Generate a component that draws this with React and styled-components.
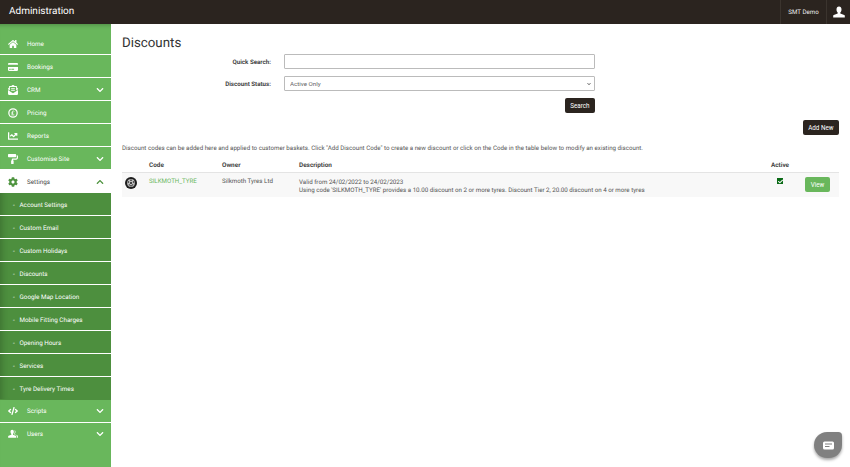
import styled, { createGlobalStyle } from "styled-components"
import {
  FaHome, FaCreditCard, FaEnvelopeOpenText, FaChartLine, FaPaintRoller, FaCog,
  FaCode, FaChevronDown, FaChevronUp, FaCheck,
} from "react-icons/fa"

const GlobalStyle = createGlobalStyle`
  html, body { margin: 0; padding: 0; height: 100%; background: #fff; }
  body {
    font-family: Roboto, "Liberation Sans", sans-serif;
    text-rendering: geometricPrecision;
    overflow: hidden;
  }
  * { box-sizing: border-box; }
`

function PoundIcon() {
  return (
    <svg width="10" height="10" viewBox="0 0 12 12" fill="none">
      <circle cx="6" cy="6" r="5" stroke="#fff" strokeWidth="1.5" />
      <path d="M7.4 4.2C7 3.2 5.3 3.3 5.2 4.6V7.8M4 6h2.4M4 8.3h3.6" stroke="#fff" strokeWidth="1" />
    </svg>
  )
}

function BustIcon() {
  return (
    <svg width="12" height="12" viewBox="0 0 12 12" fill="#fff">
      <path d="M6 0.5C4.4 0.5 3.5 1.7 3.5 3.4C3.5 4.7 4 5.8 4.7 6.4V7.4L0.8 8.9C0.4 9.1 0.2 9.4 0.2 9.8V11.5H11.8V9.8C11.8 9.4 11.6 9.1 11.2 8.9L7.3 7.4V6.4C8 5.8 8.5 4.7 8.5 3.4C8.5 1.7 7.6 0.5 6 0.5Z" />
    </svg>
  )
}

function UsersIcon() {
  return (
    <svg width="10" height="10" viewBox="0 0 12 12" fill="#fff">
      <path d="M5 1C3.7 1 3 2 3 3.4C3 4.5 3.4 5.4 4 5.9V6.8L0.8 8.1C0.4 8.3 0.2 8.6 0.2 9V10.5H9.8V9C9.8 8.6 9.6 8.3 9.2 8.1L6 6.8V5.9C6.6 5.4 7 4.5 7 3.4C7 2 6.3 1 5 1Z" />
      <path d="M7.6 1.6C8.6 1.8 9 2.6 9 3.6C9 4.5 8.7 5.2 8.2 5.7V6.4L11 7.6C11.5 7.8 11.8 8.1 11.8 8.6V10.5H10.6V8.8C10.6 8 10.2 7.6 9.6 7.3L7.2 6.2C7.9 5.4 8.2 4.5 8.2 3.4C8.2 2.8 8 2.1 7.6 1.6Z" />
    </svg>
  )
}

function TyreIcon() {
  return (
    <svg width="12" height="12" viewBox="0 0 12 12">
      <circle cx="6" cy="6" r="6" fill="#1d1d1d" />
      <circle cx="6" cy="6" r="3.9" fill="#bdbdbd" />
      <circle cx="6" cy="6" r="1" fill="#1d1d1d" />
      <circle cx="6" cy="3.3" r=".8" fill="#1d1d1d" />
      <circle cx="6" cy="8.7" r=".8" fill="#1d1d1d" />
      <circle cx="3.4" cy="5" r=".8" fill="#1d1d1d" />
      <circle cx="8.6" cy="5" r=".8" fill="#1d1d1d" />
      <circle cx="4.3" cy="7.9" r=".6" fill="#1d1d1d" />
      <circle cx="7.7" cy="7.9" r=".6" fill="#1d1d1d" />
    </svg>
  )
}

function ChatIcon() {
  return (
    <svg width="11" height="9" viewBox="0 0 11 9">
      <rect x="0" y="0.5" width="11" height="8" rx="1.5" fill="#fff" />
      <rect x="2" y="2.5" width="7" height="1" fill="#808080" />
      <rect x="2" y="5" width="4.5" height="1" fill="#808080" />
    </svg>
  )
}

const menuTop = [
  { label: "Home", icon: <FaHome size={10} /> },
  { label: "Bookings", icon: <FaCreditCard size={10} /> },
  { label: "CRM", icon: <FaEnvelopeOpenText size={10} />, arrow: true },
  { label: "Pricing", icon: <PoundIcon /> },
  { label: "Reports", icon: <FaChartLine size={10} /> },
  { label: "Customise Site", icon: <FaPaintRoller size={10} />, arrow: true },
]

const subMenu = [
  "Account Settings", "Custom Email", "Custom Holidays", "Discounts", "Google Map Location",
  "Mobile Fitting Charges", "Opening Hours", "Services", "Tyre Delivery Times",
]

const menuBottom = [
  { label: "Scripts", icon: <FaCode size={10} />, arrow: true },
  { label: "Users", icon: <UsersIcon />, arrow: true },
]

function MenuRow({ item, as }) {
  return (
    <MenuItem as={as}>
      <MenuIcon>{item.icon}</MenuIcon>
      <span>{item.label}</span>
      {item.arrow && <Arrow><FaChevronDown size={8} /></Arrow>}
    </MenuItem>
  )
}

export default function App() {
  return (
    <>
      <GlobalStyle />
      <Page>
        <Header>
          <Brand>Administration</Brand>
          <UserName>SMT Demo</UserName>
          <UserButton><BustIcon /></UserButton>
        </Header>
        <Body>
          <Sidebar>
            {menuTop.map(item => <MenuRow key={item.label} item={item} />)}
            <ActiveItem>
              <MenuIcon><FaCog size={10} /></MenuIcon>
              <span>Settings</span>
              <Arrow><FaChevronUp size={8} /></Arrow>
            </ActiveItem>
            {subMenu.map(label => (
              <SubItem key={label}>
                <SubDash>-</SubDash>
                <span>{label}</span>
              </SubItem>
            ))}
            {menuBottom.map(item => <MenuRow key={item.label} item={item} as={BottomItem} />)}
          </Sidebar>
          <Main>
            <Title>Discounts</Title>
            <SearchForm>
              <FieldRow>
                <FieldLabel>Quick Search:</FieldLabel>
                <TextInput />
              </FieldRow>
              <FieldRow>
                <FieldLabel>Discount Status:</FieldLabel>
                <SelectWrap>
                  <SelectInput defaultValue="Active Only">
                    <option>Active Only</option>
                  </SelectInput>
                  <SelectArrow><FaChevronDown size={4} /></SelectArrow>
                </SelectWrap>
              </FieldRow>
              <SearchActions>
                <DarkButton>Search</DarkButton>
              </SearchActions>
            </SearchForm>
            <AddRow>
              <DarkButton>Add New</DarkButton>
            </AddRow>
            <Intro>
              Discount codes can be added here and applied to customer baskets. Click "Add Discount Code" to create a new discount or click on the Code in the table below to modify an existing discount.
            </Intro>
            <Table>
              <HeadRow>
                <span />
                <span>Code</span>
                <span>Owner</span>
                <span>Description</span>
                <ActiveHead>Active</ActiveHead>
                <span />
              </HeadRow>
              <DataRow>
                <TyreCell><TyreIcon /></TyreCell>
                <CodeLink>SILKMOTH_TYRE</CodeLink>
                <span>Silkmoth Tyres Ltd</span>
                <Description>
                  <div>Valid from 24/02/2022 to 24/02/2023</div>
                  <div>Using code 'SILKMOTH_TYRE' provides a 10.00 discount on 2 or more tyres. Discount Tier 2, 20.00 discount on 4 or more tyres</div>
                </Description>
                <CheckCell><CheckBox><FaCheck size={5} /></CheckBox></CheckCell>
                <ViewButton>View</ViewButton>
              </DataRow>
            </Table>
          </Main>
        </Body>
        <ChatBubble><ChatIcon /></ChatBubble>
      </Page>
    </>
  )
}

const Page = styled.div`
  width: 850px;
  height: 467px;
  display: flex;
  flex-direction: column;
  overflow: hidden;
  position: relative;
`

const Header = styled.header`
  height: 24px;
  flex-shrink: 0;
  display: flex;
  align-items: stretch;
  background: #2b241f;
  color: #fff;
`

const Brand = styled.div`
  flex: 1;
  padding: 1px 0 0 9px;
  font-size: 10px;
  line-height: 22px;
`

const UserName = styled.div`
  width: 46px;
  border-left: 1px solid #3b342e;
  font-size: 6.2px;
  line-height: 24px;
  text-align: center;
  color: #eee;
`

const UserButton = styled.div`
  width: 24px;
  border-left: 1px solid #3b342e;
  display: flex;
  align-items: center;
  justify-content: center;
`

const Body = styled.div`
  flex: 1;
  display: flex;
  min-height: 0;
`

const Sidebar = styled.nav`
  width: 111px;
  flex-shrink: 0;
  padding-top: 8px;
  background: #69b75c;
  box-shadow: inset 0 5px 4px -4px rgba(0, 0, 0, 0.25);
`

const MenuItem = styled.div`
  height: 23px;
  display: flex;
  align-items: center;
  padding: 1px 0 0 8px;
  border-bottom: 1px solid #fff;
  color: #fff;
  font-size: 6.3px;
`

const ActiveItem = styled(MenuItem)`
  background: #fff;
  color: #444;
  svg { color: #4f9440; }
`

const BottomItem = styled(MenuItem)`
  padding-top: 0;
  &:last-child { border-bottom-color: transparent; }
`

const MenuIcon = styled.span`
  width: 19px;
  display: flex;
  align-items: center;
`

const Arrow = styled.span`
  margin-left: auto;
  margin-right: 7px;
  display: flex;
`

const SubItem = styled.div`
  height: 23px;
  display: flex;
  align-items: center;
  padding: 1px 0 0 13px;
  background: #4d8f3e;
  border-bottom: 1px solid #fff;
  box-shadow: inset 8px 0 6px -6px rgba(0, 0, 0, 0.2);
  color: #fff;
  font-size: 6.3px;
  &:nth-last-child(3) { border-bottom-color: #4d8f3e; }
`

const SubDash = styled.span`
  width: 6.5px;
`

const Main = styled.main`
  flex: 1;
  min-width: 0;
  padding: 11px 11px 0;
  color: #555;
`

const Title = styled.h1`
  margin: 0;
  height: 17px;
  font-size: 13.3px;
  font-weight: 400;
  line-height: 17px;
  color: #333;
`

const SearchForm = styled.div`
  width: 473px;
  margin-top: 2px;
`

const FieldRow = styled.div`
  display: flex;
  align-items: center;
  margin-bottom: 7px;
`

const FieldLabel = styled.label`
  width: 162px;
  padding-right: 13px;
  font-size: 6.2px;
  font-weight: 700;
  text-align: right;
  color: #444;
`

const TextInput = styled.input`
  flex: 1;
  height: 15px;
  border: 1px solid #bbb;
  border-radius: 1px;
  background: #fff;
`

const SelectWrap = styled.div`
  flex: 1;
  display: flex;
  position: relative;
`

const SelectInput = styled.select`
  flex: 1;
  height: 15px;
  padding-left: 5px;
  border: 1px solid #bbb;
  border-radius: 1px;
  background: #fff;
  appearance: none;
  font-family: Roboto, sans-serif;
  font-size: 6.2px;
  color: #666;
`

const SelectArrow = styled.span`
  position: absolute;
  right: 4px;
  top: 6px;
  display: flex;
  color: #555;
`

const SearchActions = styled.div`
  display: flex;
  justify-content: flex-end;
  margin-top: 6px;
`

const DarkButton = styled.button`
  height: 15px;
  padding: 0 5.5px;
  border: none;
  border-radius: 2px;
  background: #2b241f;
  color: #fff;
  font-family: Roboto, sans-serif;
  font-size: 6.3px;
`

const AddRow = styled.div`
  display: flex;
  justify-content: flex-end;
  margin-top: 7px;
`

const Intro = styled.p`
  margin: 9px 0 0;
  font-size: 6.2px;
  line-height: 8px;
`

const tableColumns = "27px 73px 77px 1fr 50px 34px"

const Table = styled.div`
  margin-top: 6px;
  font-size: 6.2px;
`

const HeadRow = styled.div`
  height: 15px;
  display: grid;
  grid-template-columns: ${tableColumns};
  align-items: center;
  font-size: 6.4px;
  font-weight: 700;
  color: #444;
  border-bottom: 1px solid #e4e4e4;
`

const ActiveHead = styled.span`
  text-align: center;
`

const DataRow = styled.div`
  height: 24px;
  display: grid;
  grid-template-columns: ${tableColumns};
  align-items: start;
  padding-top: 5px;
  background: #f8f8f8;
  line-height: 7px;
`

const TyreCell = styled.span`
  padding-left: 3px;
  margin-top: -1px;
`

const CodeLink = styled.span`
  color: #69b75c;
`

const Description = styled.div`
  line-height: 8px;
`

const CheckCell = styled.span`
  display: flex;
  justify-content: center;
`

const CheckBox = styled.span`
  width: 6px;
  height: 6px;
  display: flex;
  align-items: center;
  justify-content: center;
  background: #0a6a16;
  color: #fff;
`

const ViewButton = styled.button`
  width: 25px;
  height: 15px;
  margin-top: -1px;
  padding: 0;
  border: none;
  border-radius: 2px;
  background: #69b75c;
  color: #fff;
  font-family: Roboto, sans-serif;
  font-size: 6.3px;
`

const ChatBubble = styled.div`
  position: absolute;
  left: 814px;
  top: 432px;
  width: 28px;
  height: 26px;
  border-radius: 14px 4px 14px 14px;
  background: #808080;
  box-shadow: 0 2px 3px rgba(0, 0, 0, 0.35);
  display: flex;
  align-items: center;
  justify-content: center;
`
